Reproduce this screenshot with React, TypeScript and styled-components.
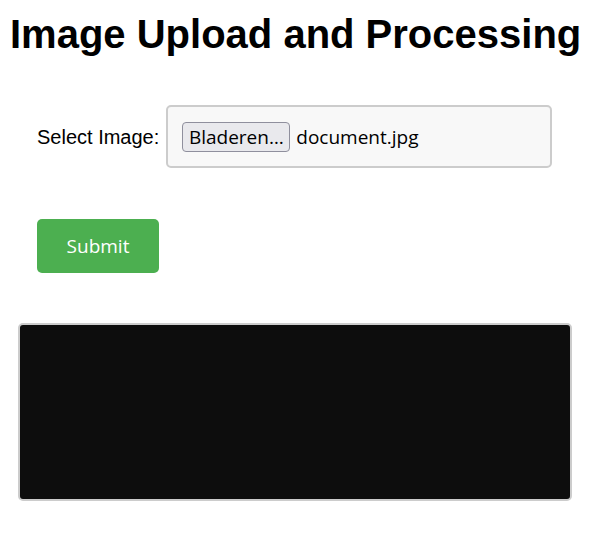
import React from "react";
import styled, { createGlobalStyle } from "styled-components";

const Global = createGlobalStyle`
  html, body { margin: 0; padding: 0; background: #ffffff; }
  body { font-family: "Liberation Sans", Arial, sans-serif; color: #000; }
`;

const Page = styled.div`
  padding: 11px 10px 0 10px;
`;

const Title = styled.h1`
  margin: 0;
  font-family: "Liberation Sans", Arial, sans-serif;
  font-weight: 700;
  font-size: 40px;
  line-height: 46px;
`;

const Content = styled.div`
  padding: 48px 0 0 8px;
  display: flex;
  flex-direction: column;
`;

const Form = styled.form`
  display: flex;
  flex-direction: column;
  align-items: flex-start;
  gap: 51px;
  padding-left: 19px;
`;

const Row = styled.div`
  display: flex;
  align-items: center;
  gap: 7px;
`;

const Label = styled.label`
  font-family: "Liberation Sans", Arial, sans-serif;
  font-size: 20px;
  padding-top: 1px;
`;

const FileBox = styled.div`
  box-sizing: border-box;
  width: 386px;
  height: 63px;
  border: 2px solid #cccccc;
  border-radius: 5px;
  background: #f8f8f8;
  display: flex;
  align-items: center;
  padding-left: 14px;
  gap: 6px;
`;

const BrowseButton = styled.span`
  box-sizing: border-box;
  height: 30px;
  width: 108px;
  display: inline-flex;
  align-items: center;
  justify-content: center;
  border: 1px solid #8f8f9d;
  border-radius: 4px;
  background: #e9e9ed;
  font-family: "Open Sans", sans-serif;
  font-size: 19px;
  color: #000;
`;

const FileName = styled.span`
  font-family: "Open Sans", sans-serif;
  font-size: 19px;
`;

const SubmitButton = styled.button`
  box-sizing: border-box;
  width: 122px;
  height: 54px;
  border: none;
  border-radius: 5px;
  background: #4caf50;
  color: #ffffff;
  font-family: "Open Sans", sans-serif;
  font-size: 19px;
  padding: 0;
`;

const Output = styled.div`
  box-sizing: border-box;
  margin-top: 50px;
  width: 554px;
  height: 178px;
  border: 2px solid #cccccc;
  border-radius: 5px;
  background: #0d0d0d;
`;

export default function App() {
  return (
    <>
      <Global />
      <Page>
        <Title>Image Upload and Processing</Title>
        <Content>
          <Form onSubmit={(e) => e.preventDefault()}>
            <Row>
              <Label>Select Image:</Label>
              <FileBox>
                <BrowseButton>Bladeren…</BrowseButton>
                <FileName>document.jpg</FileName>
              </FileBox>
            </Row>
            <SubmitButton type="submit">Submit</SubmitButton>
          </Form>
          <Output />
        </Content>
      </Page>
    </>
  );
}
